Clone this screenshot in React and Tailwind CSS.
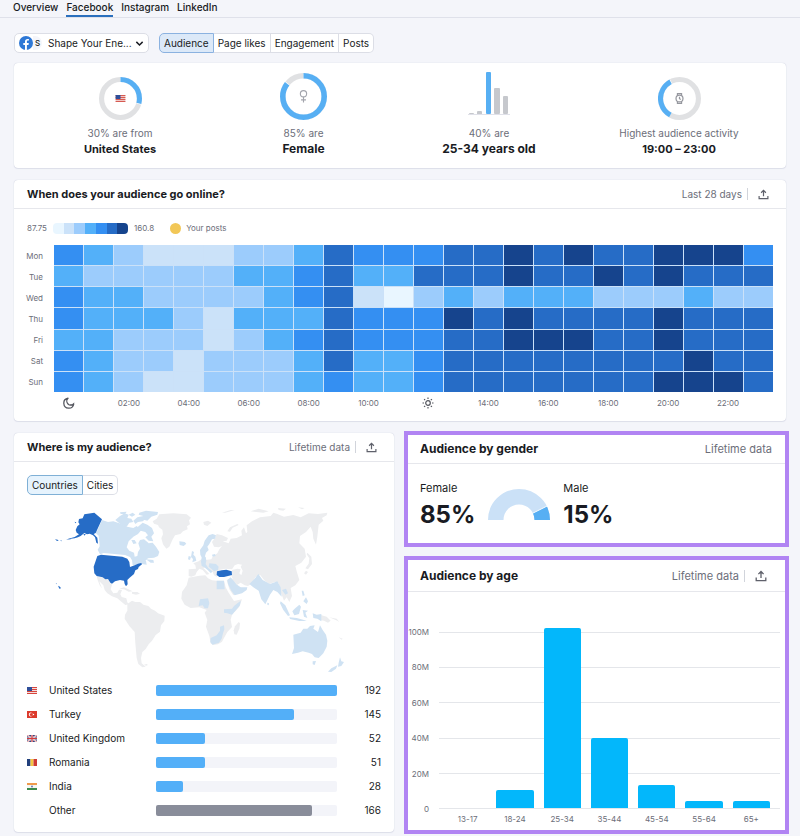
import React from "react";

const SCALE = ["#e9f6ff", "#cbe2f9", "#9cccfc", "#53b0f9", "#348ff2", "#266cc6", "#16448d"];

const HEAT = [
  ["Mon", "432111223544455656556664"],
  ["Tue", "322222334533555655656555"],
  ["Wed", "433222234510232333222322"],
  ["Thu", "433321333544465655556555"],
  ["Fri", "332221234544455666556555"],
  ["Sat", "432212223533455555555655"],
  ["Sun", "432112223433455555556665"],
];

const COUNTRIES = [
  { name: "United States", flag: "us", value: 192, share: 100 },
  { name: "Turkey", flag: "tr", value: 145, share: 76 },
  { name: "United Kingdom", flag: "gb", value: 52, share: 27 },
  { name: "Romania", flag: "ro", value: 51, share: 27 },
  { name: "India", flag: "in", value: 28, share: 15 },
  { name: "Other", flag: null, value: 166, share: 86 },
];

const AGES = [
  ["13-17", 0],
  ["18-24", 10],
  ["25-34", 102],
  ["35-44", 40],
  ["45-54", 13],
  ["55-64", 4],
  ["65+", 4],
];

function UploadIcon({ className }) {
  return (
    <svg viewBox="0 0 12 12" className={className} fill="none" stroke="currentColor" strokeWidth="1.3" aria-hidden="true">
      <path d="M6 8V1.6M3.4 4.1 6 1.5l2.6 2.6M1.2 7.6v3h9.6v-3" />
    </svg>
  );
}

function Flag({ code }) {
  const shapes = {
    us: (
      <>
        <path fill="#f3dcdc" d="M0 0h20v14H0z" />
        <path fill="#d8453c" d="M0 0h20v2H0zM0 4h20v2H0zM0 8h20v2H0zM0 12h20v2H0z" />
        <path fill="#2f4f9a" d="M0 0h10v8H0z" />
      </>
    ),
    tr: (
      <>
        <path fill="#dc3a2c" d="M0 0h20v14H0z" />
        <circle cx="7.5" cy="7" r="3.8" fill="#fff" />
        <circle cx="8.6" cy="7" r="3" fill="#dc3a2c" />
        <circle cx="13" cy="7" r="1.4" fill="#fff" />
      </>
    ),
    gb: (
      <>
        <path fill="#35457f" d="M0 0h20v14H0z" />
        <path stroke="#fff" strokeWidth="3" d="M0 0l20 14M20 0 0 14" />
        <path stroke="#d23b3b" strokeWidth="1" d="M0 0l20 14M20 0 0 14" />
        <path stroke="#d9dcea" strokeWidth="4" d="M10 0v14M0 7h20" />
        <path stroke="#d23b3b" strokeWidth="2.4" d="M10 0v14M0 7h20" />
      </>
    ),
    ro: (
      <>
        <path fill="#22407c" d="M0 0h7v14H0z" />
        <path fill="#f4c744" d="M7 0h6v14H7z" />
        <path fill="#cf3b34" d="M13 0h7v14h-7z" />
      </>
    ),
    in: (
      <>
        <path fill="#f6f6f2" d="M0 0h20v14H0z" />
        <path fill="#ef9a4c" d="M0 0h20v4H0z" />
        <path fill="#3a8a4b" d="M0 10h20v4H0z" />
        <circle cx="10" cy="7" r="1.8" fill="#5a6fae" />
      </>
    ),
  };
  return (
    <svg viewBox="0 0 20 14" className="h-[7px] w-[10px]" fill="none" aria-hidden="true">
      {shapes[code]}
    </svg>
  );
}

function Ring({ size, from, to, children }) {
  const r = 18.5;
  const c = 2 * Math.PI * r;
  return (
    <svg viewBox="0 0 42 42" width={size} height={size} fill="none" aria-hidden="true">
      <circle cx="21" cy="21" r={r} stroke="#e0e1e3" strokeWidth="5" />
      <g transform={`rotate(${from * 360 - 90} 21 21)`}>
        <circle cx="21" cy="21" r={r} stroke="#fff" strokeWidth="5" strokeDasharray={`${(to - from) * c + 1.2} ${c}`} strokeDashoffset="0.6" />
        <circle cx="21" cy="21" r={r} stroke="#57aff3" strokeWidth="5" strokeDasharray={`${(to - from) * c} ${c}`} />
      </g>
      {children}
    </svg>
  );
}

function Stat({ label, value, large = false, children }) {
  return (
    <div className="flex flex-col items-center">
      <div className="flex h-[57px] items-end">{children}</div>
      <p className="mt-[5px] text-[10px] leading-4 text-[#6c6e79]">{label}</p>
      <p className={large ? "text-[12px] leading-4 font-bold" : "text-[11px] leading-4 font-bold"}>{value}</p>
    </div>
  );
}

function WorldMap() {
  return (
    <svg viewBox="0 0 960 540" className="h-auto w-full" role="img" aria-label="Audience by country">
      <g fill="#ecedef">
        <path d="M358 43 400 40l40 3 13 10-6 8 3 12-9 6 2 9-14 6-8 8-16 4-8 14-9 20-9 6-10-13-5-18 5-12-2-14-10-7-3-7-12-4-4-7 12-8z" />
        <path d="M170 228l18 4 8 6 8-1 7 11 5 6-4 14 8 12 12-2 5-9 9 1-5 13 4 8 14 4 3 12 4 6-10 2-10-8-14-12-16-6-14-9-8-10-4-14-12-12 4 12 5 10-8-10-6-16z" />
        <path d="M238 266l14-4 18 8 8 4-12 1-14-7zM276 276l16 0 8 5-12 3-12-3z" />
        <path d="M262 312l14-10 10 4 14 0 10 8 15 4 8 8 12 6 9 8 20 7-1 16-10 13-3 19-13 10-11 17-10 11-9 14-10 9-4 18 2 16 12 10-10 2-12-10-5-18-4-44-2-34-16-18-14-22 1-12 7-12zM312 494l8-2 4 3-6 2z" />
        <path d="M446 233l12-2 20-4 18-1 8 9 12 6 14 1 22 0 5 20 8 15 9 14 8 12 24-5-8 22-22 24-4 15 4 22-14 15-10 18-6 11-12 8-14 2-8-5-4-22-10-28 4-20-8-22 6-8-22-8-26 2-18-10-10-18 2-20 14-20z" />
        <path d="M596 366l4 4-2 16-8 18-7-1-2-12 4-12z" />
        <path d="M446 228L446 208 468 206 466 196 460 190 476 184 486 176 496 180 514 178 518 170 532 160 538 148 546 138 536 142 522 140 516 126 526 112 530 102 546 106 564 114 560 122 548 124 566 130 572 116 590 114 606 106 604 92 612 82 618 100 622 96 620 76 636 64 660 52 692 48 700 38 712 42 732 50 760 45 782 52 806 40 834 42 862 38 860 46 846 54 850 62 836 74 832 110 828 134 820 116 818 96 812 80 798 96 780 108 778 130 794 146 798 170 784 188 766 198 770 214 778 240 766 256 752 264 756 288 748 306 740 292 732 302 722 276 716 250 704 246 688 252 674 242 660 224 646 232 636 250 624 258 614 256 602 248 592 254 580 242 574 226 576 210 592 206 602 208 598 220 604 226 608 212 602 200 606 194 594 192 584 196 576 208 556 206 536 210 538 218 530 230 522 226 518 216 508 214 500 202 490 204 500 214 508 222 500 224 488 210 478 206 470 216 466 226 454 230z" />
        <path d="M560 240l16-4 8 8 14 16 12 6-20 12-10 8-12-18z" />
        <path d="M490 66l14-4 10 6-12 10-10-4zM546 38l26-8 12 0-28 8zM562 94l8-12 22-10 4 3-18 8-8 12zM632 34l24-8 30 8-16 4zM714 24l24 2-8 6-14-2zM774 22l20 2-8 4z" />
        <path d="M802 158l12 12 2 22-12 16-8-3 10-14 2-16-8-12zM798 212l6 4-6 8-6-4z" />
        <path d="M840 344l20 6 12 12-8 6-12-6-12-2zM868 352l22 4 8 10-6-4zM896 412l12 4-3 3z" />
      </g>
      <g fill="#cfe2f3">
        <path d="M186 60l18 6 16-2 18 6 24 10 18 4 10-6 14 12-10 12-14 8-14 14-6 18 8 10 14 6 2 12 8-2 2-12 6-10-5-16 5-10 12-2 10 8 4 4 12-2 10 12 10 16-4 12-12 5-18 2-12 11-18 8-16 2-2-15-6-10-15-6-64-6-11 4-7-14 6-10-1-13-2-19-12-11 7-2z" />
        <path d="M226 60l14-12 14-8 12 4-4 10 12 2 6 10-12 2-8 12-14-4-8-6zM240 37l20-2-4 6-14 1zM266 44l12-6 8 6-10 6zM280 62l12-10 18-4 8 8-10 8-14 2-8 6zM298 38l20-6 36 4-2 8-18 6-12 12-16-4 4-10-14-4zM294 80l14-12 14 6 14 10 6 16-8 10 6 14-14-2-10-10 8-6-8-10-14-4-10-6zM274 120l10 0 6 10-10 2zM318 178l22 2 2 8-10 0zM302 180l16 2 2 12-14-2z" />
        <path d="M418 124l16 2 5 5-8 7-12-3zM456 153l6 3-2 8 6 6 3 12-12 5 2-10-6-6zM446 168l7 2-3 10-6-2zM481 164l-1-14 10-14 4-14 12-16 12-4 10 4-3 10-9 2-8 14-6 8 4 10-8 8-4 14-7 4zM485 172l12-2 2 12-2 10 8 12 12 10-4 6-10-10-10-8-8-4-2-12zM516 164l9-2 2 6-9 2zM508 190l20 2 8 8-2 10-12 4-8-8-8-6z" />
        <path d="M530 242h22l2 26h-24zM480 298l24-3 4 14-4 16-10 0-6-9-12 2zM552 328l24-2 6-8 20-16-2 14-24 28-14-4-10-2zM512 414l18-8 10-14 0-12 12-4 1 12-4 12-4 16-8 12-20 6-6-8z" />
        <path d="M562 240l10-8 10 12 8 10 12 8 20 0-2 8-14 10-22 6-10-14-10-20z" />
        <path d="M628 252l16-16 11-14 13 18 22 12 22-8 10 18 3 28-13-14-12-6-10 14-14 29-12-15-8-26-16-10zM682 308l5 2-1 6-4-2z" />
        <path d="M722 304l14 12 14 30-6 2-14-18-10-20zM764 326l14-12 5 6-6 22-14 4-6-12zM748 352l22 2 22 6 8 3-22 0-28-6zM788 330l16 2-8 6 6 16-10-4-2-10zM818 340l12 4 14-2 0 22-12-8-12-2zM785 272l5 0 4 14-6 2zM798 292l6 12-4 8-10-8zM726 270l12-4 6 14-8 4z" />
        <path d="M760 404l22-6 8-12 12 0 8-8 14-2-4 10 14 10 6-20 8 14 10 14 4 18-2 18-10 20-14 14-12-2-8-10-10-4-18-4-14 4-18 4 6-18zM818 484l10-1-4 12-6-2zM900 472l4 12 8 2-8 12-10 2 2-12zM892 496l-4 10-14 10-10-1 10-10z" />
      </g>
      <g fill="#266cc6">
        <path d="M133 43l30-5 23 20-19 41-6 3 11 11 2 18-5-3-4-16-6-6-10-5-8 2-8-4-11 9-8 4-10 3-24 3 24-7 13-8-7-5-3-8 5-11 7-6-4-6 2-10 11-2z" />
        <path d="M45 118l8 1 3 4-6-1zM60 121l6 1-2 2zM78 119l16-4-2 3zM104 65l5 2-3 3zM130 102l7 0-3 5zM47 249l4 2-1 2zM54 257l6 3 3 5-5 1z" />
        <path d="M172 168l11-4 64 6 15 6 6 10 2 15 14-5 10-5 10-2 2 4-10 8-2 6-8 4-4 11-14 12-6 6 1 13-5 6-4-7-2-10-12-2-15 4-9 7-5-3-7-11-8 1-8-6-18-4-7-8-2-20z" />
        <path d="M531 214l14-3 14-2 16 5 1 11-12 3-12 3-14 0-8-6z" />
      </g>
    </svg>
  );
}

function CardHeader({ title, note, size = "small", upload = true }) {
  const large = size !== "small";
  const box = {
    small: "flex h-[29px] items-center border-b border-[#e6e7ec] pr-4 pl-[13px]",
    medium: "flex h-[29px] items-center border-b border-[#e6e7ec] pr-[13px] pl-3",
    tall: "flex h-8 items-center border-b border-[#e6e7ec] pr-[17px] pl-3",
  };
  return (
    <header className={box[size]}>
      <h2 className={large ? "flex-1 text-[12px] leading-4 font-bold" : "flex-1 text-[11px] leading-4 font-bold"}>{title}</h2>
      <span className={large ? "text-[11px] leading-4 text-[#6c6e79]" : "text-[10px] leading-4 text-[#6c6e79]"}>{note}</span>
      {upload && (
        <>
          <span className="ml-[5px] h-3 w-px bg-[#d1d4db]" />
          <button type="button" aria-label="Export" className="ml-[9px] p-px text-[#5f616b]">
            <UploadIcon className={large ? "h-3 w-3" : "h-[11px] w-[11px]"} />
          </button>
        </>
      )}
    </header>
  );
}

function AxisMark({ hour }) {
  if (hour === 0) {
    return (
      <svg viewBox="0 0 24 24" className="h-3 w-3" fill="none" stroke="#55575f" strokeWidth="2.6" strokeLinejoin="round" aria-label="Midnight">
        <path d="M10 2.5A10 10 0 1 0 21.5 14 8 8 0 0 1 10 2.5z" />
        <path d="M22 11.5a7 7 0 0 1-8 4" strokeWidth="1.6" />
      </svg>
    );
  }
  if (hour === 12) {
    return (
      <svg viewBox="0 0 24 24" className="h-3 w-3" fill="none" stroke="#55575f" strokeWidth="2.4" aria-label="Noon">
        <circle cx="12" cy="12" r="4.6" />
        <path d="M12 1v3M12 20v3M1 12h3M20 12h3M4.2 4.2l2.1 2.1M17.7 17.7l2.1 2.1M4.2 19.8l2.1-2.1M17.7 6.3l2.1-2.1" />
      </svg>
    );
  }
  return <span className="whitespace-nowrap">{String(hour).padStart(2, "0")}:00</span>;
}

const card = "rounded-[4px] bg-white shadow-[0_0_1px_#b9bfd0,0_1px_1px_#e1e3ec]";

export default function App() {
  return (
    <div className="min-h-screen overflow-hidden bg-[#f4f5fa] font-['Inter','Liberation_Sans',sans-serif] text-[#191b23]">
      <nav className="flex h-[18px] gap-2 border-b border-[#dfe1ea] pl-[13px] text-[10px] leading-[14px] font-medium">
        <a href="#overview">Overview</a>
        <a href="#facebook" className="border-b-2 border-[#2a6fbd]">Facebook</a>
        <a href="#instagram">Instagram</a>
        <a href="#linkedin">LinkedIn</a>
      </nav>

      <main className="px-[14px] pt-[15px]">
        <div className="flex items-center gap-[10px] text-[10px] leading-4">
          <button type="button" className="flex h-5 w-[135px] items-center rounded-[5px] border border-[#dcdee6] bg-white px-1">
            <svg viewBox="0 0 14 14" className="h-[14px] w-[14px]" aria-hidden="true">
              <circle cx="7" cy="7" r="7" fill="#2e78d6" />
              <path fill="#fff" d="M6 14V8.9H4.3V7H6V5.6c0-1.700 1-2.700 2.600-2.700.7 0 1.300.1 1.300.1v1.600H9c-.8 0-1.100.5-1.100 1V7h1.900l-.3 1.900H7.900V14z" />
            </svg>
            <span className="flex h-[14px] w-[9px] items-center justify-center rounded-r-full bg-[#f4f5fa] text-[8px] font-medium">S</span>
            <span className="ml-[6px] flex-1 text-left">Shape Your Ene...</span>
            <svg viewBox="0 0 10 10" className="h-[9px] w-[9px]" fill="none" stroke="#191b23" strokeWidth="1.6" aria-hidden="true">
              <path d="M1.500 3.200 5 6.700l3.500-3.500" />
            </svg>
          </button>
          <div className="flex h-5 text-[10px]">
            <button type="button" className="rounded-l-[5px] border border-[#8bb2e0] bg-[#dce9f8] px-1">Audience</button>
            <button type="button" className="border-y border-r border-[#dcdee6] bg-white px-1">Page likes</button>
            <button type="button" className="border-y border-r border-[#dcdee6] bg-white px-1">Engagement</button>
            <button type="button" className="rounded-r-[5px] border-y border-r border-[#dcdee6] bg-white px-1">Posts</button>
          </div>
        </div>

        <section className={`${card} mt-[10px] grid h-[105px] grid-cols-[186fr_181fr_190fr_190fr] pr-3 pl-[13px]`}>
          <Stat label="30% are from" value="United States">
            <Ring size={43} from={0} to={0.29}>
              <svg x="16" y="17.5" width="10" height="7" viewBox="0 0 20 14">
                <path fill="#f0c8c6" d="M0 0h20v14H0z" />
                <path fill="#d65a52" d="M0 0h20v2H0zM0 4h20v2H0zM0 8h20v2H0zM0 12h20v2H0z" />
                <path fill="#2f4f9a" d="M0 0h10v8H0z" />
              </svg>
            </Ring>
          </Stat>
          <Stat label="85% are" value="Female" large>
            <Ring size={47} from={0} to={0.85}>
              <g stroke="#a3a5ad" strokeWidth="1">
                <circle cx="21" cy="18.5" r="2.8" />
                <path d="M21 21.4v5M18.800 24h4.400" />
              </g>
            </Ring>
          </Stat>
          <Stat label="40% are" value="25-34 years old" large>
            <svg viewBox="0 0 42 43" className="mb-[5px] h-[43px] w-[42px]" aria-hidden="true">
              <g fill="#c6c8cd">
                <rect x="1" y="41" width="5" height="2" rx="1" />
                <rect x="9" y="39" width="5" height="4" rx="1" />
                <rect x="26" y="16" width="6" height="26" rx="1" />
                <rect x="35" y="24" width="5" height="18" rx="1" />
                <path d="M0 42h42v1H0z" fill="#e0e1e9" />
              </g>
              <rect x="18" y="0" width="5" height="42" rx="1" fill="#57aff3" />
            </svg>
          </Stat>
          <Stat label="Highest audience activity" value="19:00 – 23:00">
            <Ring size={43} from={0.58} to={0.92}>
              <g stroke="#96989f" strokeWidth="1.2">
                <circle cx="21" cy="21" r="3.4" />
                <path d="M19 17.900v-1.700h4v1.700M19 24.100v1.700h4v-1.700M21 19.300V21.200l1.300.8" />
              </g>
            </Ring>
          </Stat>
        </section>

        <section className={`${card} mt-3 h-[241px]`}>
          <CardHeader title="When does your audience go online?" note="Last 28 days" />
          <div className="flex items-center px-[13px] pt-[13px] text-[8px] leading-3 text-[#6c6e79]">
            <span>87.75</span>
            <span className="ml-[6px] flex h-[11px] w-[75px] overflow-hidden rounded-[4px]">
              {SCALE.map((c) => (
                <span key={c} className="flex-1" style={{ backgroundColor: c }} />
              ))}
            </span>
            <span className="ml-[6px]">160.8</span>
            <span className="ml-4 h-[11px] w-[11px] rounded-full bg-[#f2c757]" />
            <span className="ml-[5px]">Your posts</span>
          </div>
          <div className="mt-[11px] grid grid-cols-[16px_1fr] gap-x-[11px] px-[13px] text-[8px] leading-3 text-[#6c6e79]">
            <div className="grid h-[147px] grid-rows-7 items-center justify-end text-right">
              {HEAT.map(([day]) => (
                <span key={day}>{day}</span>
              ))}
            </div>
            <div className="grid h-[147px] grid-cols-24 grid-rows-7 gap-px bg-[#cbe1f8]">
              {HEAT.flatMap(([day, row]) =>
                row.split("").map((v, i) => <span key={day + i} style={{ backgroundColor: SCALE[v] }} />)
              )}
            </div>
            <div className="col-start-2 mt-[5px] grid grid-cols-12">
              {Array.from({ length: 12 }, (_, i) => (
                <div key={i} className="flex h-3 w-1/2 items-center justify-center">
                  <AxisMark hour={i * 2} />
                </div>
              ))}
            </div>
          </div>
        </section>

        <div className="-mr-[3px] mt-[10px] grid grid-cols-[380fr_385fr] items-start gap-[10px]">
          <section className={`${card} mt-[2px] pb-[10px]`}>
            <CardHeader title="Where is my audience?" note="Lifetime data" />
            <div className="px-[13px] pt-[13px]">
              <div className="flex h-5 text-[10px] leading-4">
                <button type="button" className="rounded-l-[5px] border border-[#7fb0d6] bg-[#e6f3fd] px-1">Countries</button>
                <button type="button" className="rounded-r-[5px] border-y border-r border-[#dcdee6] bg-white px-1">Cities</button>
              </div>
              <div className="mt-[5px] mr-[21px] ml-[13px]">
                <WorldMap />
              </div>
              <table className="-mt-[2px] w-full table-fixed text-[10px] leading-4">
                <tbody>
                  {COUNTRIES.map((c) => (
                    <tr key={c.name} className="h-6">
                      <td className="w-[22px]">{c.flag && <Flag code={c.flag} />}</td>
                      <td className="w-[107px]">{c.name}</td>
                      <td>
                        <div className="h-[11px] rounded-[2px] bg-[#f3f4f9]">
                          <div
                            className={c.flag ? "h-full rounded-[2px] bg-[#53aff8]" : "h-full rounded-[2px] bg-[#898d9a]"}
                            style={{ width: `${c.share}%` }}
                          />
                        </div>
                      </td>
                      <td className="w-11 text-right">{c.value}</td>
                    </tr>
                  ))}
                </tbody>
              </table>
            </div>
          </section>

          <div className="flex flex-col gap-[9px]">
            <section className="h-[116px] border-4 border-[#b184f3] bg-white">
              <CardHeader title="Audience by gender" note="Lifetime data" size="medium" upload={false} />
              <div className="flex items-start gap-[13px] px-3 pt-4">
                <div>
                  <p className="text-[11px] leading-4">Female</p>
                  <p className="mt-[3px] text-[24px] leading-8 font-bold">85%</p>
                </div>
                <svg viewBox="0 0 62 31" className="mt-[9px] h-[31px] w-[62px]" fill="none" aria-hidden="true">
                  <path d="M7.750 31a23.250 23.250 0 0 1 46.500 0" stroke="#cbe1f7" strokeWidth="15.5" />
                  <path d="M54.250 31a23.250 23.250 0 0 0-2.500-10.500" stroke="#57aff3" strokeWidth="15.5" />
                  <path d="M44.500 24.300 59.500 16.800" stroke="#fff" strokeWidth="1" />
                </svg>
                <div>
                  <p className="text-[11px] leading-4">Male</p>
                  <p className="mt-[3px] text-[24px] leading-8 font-bold">15%</p>
                </div>
              </div>
            </section>

            <section className="h-[278px] border-4 border-[#b184f3] bg-white">
              <CardHeader title="Audience by age" note="Lifetime data" size="tall" />
              <div className="grid grid-cols-[18px_1fr] gap-x-[10px] pt-[40px] pr-[5px] pl-[3px] text-[8px] leading-3 text-[#6c6e79]">
                <div className="-my-[6px] flex flex-col justify-between">
                  {["100M", "80M", "60M", "40M", "20M", "0"].map((t) => (
                    <span key={t} className="flex justify-end">{t}</span>
                  ))}
                </div>
                <div className="grid h-[177px]">
                  <div className="col-start-1 row-start-1 flex flex-col justify-between">
                    {[0, 1, 2, 3, 4, 5].map((n) => (
                      <span key={n} className="h-px bg-[#e4e6ea]" />
                    ))}
                  </div>
                  <div className="z-10 col-start-1 row-start-1 flex h-[176px] items-end px-[5px]">
                    {AGES.map(([age, v]) => (
                      <div key={age} className="flex h-full flex-1 items-end px-[5px]">
                        <div className="w-full rounded-t-[2px] bg-[#03b7fb]" style={{ height: `${v}%` }} />
                      </div>
                    ))}
                  </div>
                </div>
                <div className="col-start-2 mt-1 flex px-[5px] text-center">
                  {AGES.map(([age]) => (
                    <span key={age} className="flex-1">{age}</span>
                  ))}
                </div>
              </div>
            </section>
          </div>
        </div>
      </main>
    </div>
  );
}
